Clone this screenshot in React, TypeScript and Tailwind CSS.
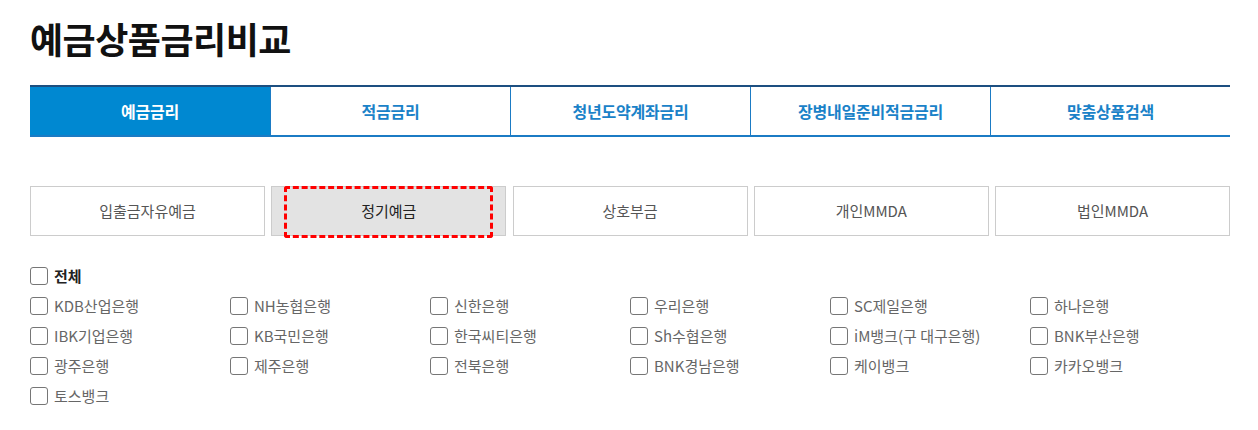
const TABS = ["예금금리", "적금금리", "청년도약계좌금리", "장병내일준비적금금리", "맞춤상품검색"];
const TYPES = ["입출금자유예금", "정기예금", "상호부금", "개인MMDA", "법인MMDA"];
const BANKS = [
  "KDB산업은행", "NH농협은행", "신한은행", "우리은행", "SC제일은행", "하나은행",
  "IBK기업은행", "KB국민은행", "한국씨티은행", "Sh수협은행", "iM뱅크(구 대구은행)", "BNK부산은행",
  "광주은행", "제주은행", "전북은행", "BNK경남은행", "케이뱅크", "카카오뱅크",
  "토스뱅크",
];

function Box() {
  return <span className="h-[18px] w-[18px] shrink-0 rounded-[3px] border border-[#767676] bg-white" />;
}

export default function App() {
  return (
    <div className="min-h-[430px] bg-white px-[30px] pt-[16px] font-['Noto_Sans_CJK_KR',sans-serif]">
      <h1 className="text-[36px] font-bold leading-[44px] tracking-[-0.5px] text-[#111]">예금상품금리비교</h1>

      {/* Main tabs */}
      <div className="mt-[25px] flex w-[1200px] border-t-2 border-b-2 border-t-[#1d4f80] border-b-[#1b7bc4]">
        {TABS.map((t, i) => (
          <div
            key={t}
            className={
              "flex h-[48px] w-[240px] items-center justify-center text-[16px] font-bold tracking-[-0.2px] " +
              (i === 0 ? "bg-[#0088d1] text-white" : "border-l border-[#1b7bc4] bg-white text-[#1a82c8]")
            }
          >
            {t}
          </div>
        ))}
      </div>

      {/* Product types */}
      <div className="mt-[49px] flex w-[1200px] justify-between">
        {TYPES.map((t, i) => (
          <div
            key={t}
            className={
              "relative flex h-[50px] w-[235px] items-center justify-center border border-[#cccccc] text-[15px] " +
              (i === 1 ? "bg-[#e3e3e3] text-[#222]" : "bg-white text-[#555]")
            }
          >
            {i === 1 && (
              <span className="pointer-events-none absolute inset-x-[12px] top-[-1px] bottom-[-3px] rounded-[3px] border-[3px] border-dashed border-[#ff0000]" />
            )}
            {t}
          </div>
        ))}
      </div>

      {/* Banks */}
      <div className="mt-[25px]">
        <label className="flex h-[30px] items-center gap-[6px] text-[15px] font-bold text-[#222]">
          <Box />
          전체
        </label>
        <div className="grid w-[1200px] grid-cols-6">
          {BANKS.map((b) => (
            <label key={b} className="flex h-[30px] items-center gap-[6px] text-[15px] text-[#666]">
              <Box />
              {b}
            </label>
          ))}
        </div>
      </div>
    </div>
  );
}
